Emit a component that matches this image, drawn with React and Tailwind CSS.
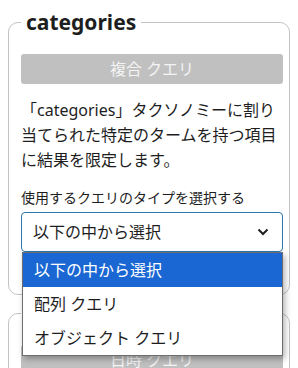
import React from 'react'

const font = { fontFamily: '"Noto Sans", "Noto Sans CJK JP", sans-serif' }

const options = ['以下の中から選択', '配列 クエリ', 'オブジェクト クエリ']

const Chevron = () => (
    <svg width="12" height="8" viewBox="0 0 12 8" className="shrink-0">
        <path d="M1.5 1.5 L6 6 L10.5 1.5" fill="none" stroke="#1e1e1e" strokeWidth="2" />
    </svg>
)

export default function App() {
    return (
        <div className="bg-white w-[298px] h-[368px] overflow-hidden p-2 text-[#1e1e1e]" style={font}>
            {/* categories */}
            <fieldset className="border border-[#c3c3c3] rounded-[10px] pl-3 pr-[6px] pt-[18px] pb-[42px]">
                <legend className="px-[5px] text-[21px] leading-[28px] font-bold">categories</legend>
                <div className="h-[30px] rounded-[3px] bg-[#c0c0c0] text-[#f4f4f4] text-[16px] flex items-center justify-center">
                    複合 クエリ
                </div>
                <p className="mt-[14px] text-[16px] leading-[25px]">
                    「categories」タクソノミーに割り当てられた特定のタームを持つ項目に結果を限定します。
                </p>
                <label className="block mt-[15px] text-[14px] leading-[20px]">
                    使用するクエリのタイプを選択する
                </label>
                <div className="relative mt-[4px]">
                    <div className="h-[40px] border border-[#2b77b0] rounded-[4px] bg-white flex items-center justify-between pl-[11px] pr-[13px] text-[16px]">
                        <span>以下の中から選択</span>
                        <Chevron />
                    </div>
                    <ul className="absolute z-10 left-[1px] right-0 top-[40px] bg-white border border-[#6e6e6e] shadow-[2px_3px_6px_rgba(0,0,0,0.3)]">
                        {options.map((opt, i) => (
                            <li
                                key={opt}
                                className={`h-[34px] flex items-center pl-[11px] text-[16px] ${i === 0 ? 'bg-[#1a67d3] text-white' : 'text-[#1e1e1e]'}`}
                            >
                                {opt}
                            </li>
                        ))}
                    </ul>
                </div>
            </fieldset>

            {/* next block, its title is hidden under the open list */}
            <fieldset className="mt-1 border border-[#c3c3c3] rounded-[10px] pl-3 pr-[6px] pt-[18px] pb-4">
                <legend className="h-[28px] w-[110px] px-[5px]" />
                <div className="h-[30px] rounded-[3px] bg-[#c0c0c0] text-[#f4f4f4] text-[16px] flex items-center justify-center">
                    日時 クエリ
                </div>
            </fieldset>
        </div>
    )
}
